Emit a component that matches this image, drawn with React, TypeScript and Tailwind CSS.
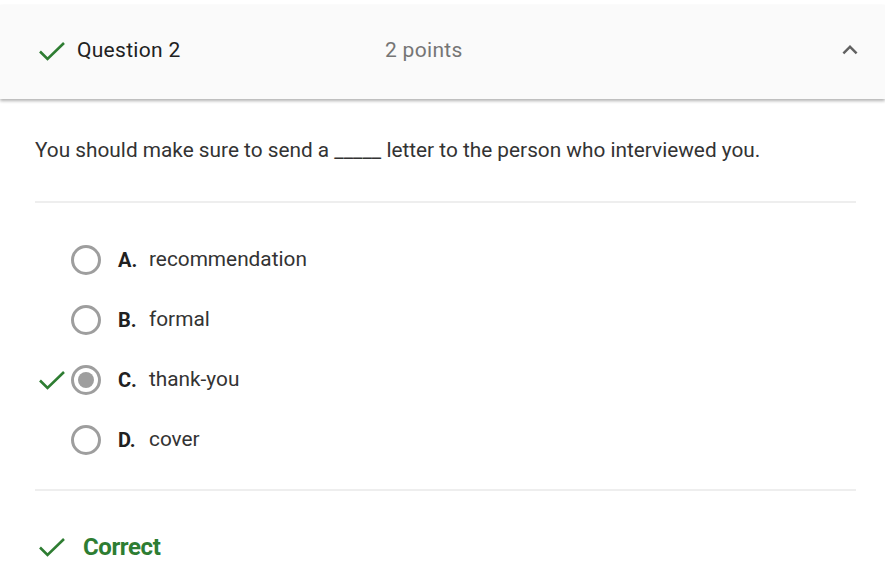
import { useState } from 'react';

const options = [
  { letter: 'A.', text: 'recommendation' },
  { letter: 'B.', text: 'formal' },
  { letter: 'C.', text: 'thank-you' },
  { letter: 'D.', text: 'cover' },
];

const Check = ({ className = '' }: { className?: string }) => (
  <svg viewBox="0 0 28 20" className={className} fill="none">
    <path d="M2 10.5l7.5 7.5L26 2" stroke="#2e7d32" strokeWidth="2.6" />
  </svg>
);

export default function App() {
  const [selected] = useState(2);

  return (
    <div className="w-[885px] h-[588px] bg-white overflow-hidden text-[#212121]" style={{ fontFamily: 'Roboto, "Liberation Sans", sans-serif' }}>
      <div className="h-[5px]" />
      <div className="h-[94px] bg-[#fafafa] shadow-[0_2px_3px_rgba(0,0,0,0.3)] flex items-center pl-[38px] pr-[20px] pb-[3px]">
        <div className="w-[347px] flex items-center">
          <Check className="w-[28px] h-[20px]" />
          <span className="ml-[11px] text-[21px] tracking-[0.3px]">Question 2</span>
        </div>
        <span className="text-[21px] tracking-[0.3px] text-[#757575]">2 points</span>
        <svg viewBox="0 0 24 24" className="ml-auto mb-[2px] w-[30px] h-[30px]" fill="#616161">
          <path d="M7.41 15.41L12 10.83l4.59 4.58L18 14l-6-6-6 6z" />
        </svg>
      </div>

      <div className="px-[35px]">
        <p className="mt-[38px] text-[20.8px] text-[#333] leading-[26px]">
          You should make sure to send a _____ letter to the person who interviewed you.
        </p>
        <div className="mt-[38px] mr-[-6px] h-[2px] bg-[#eeeeee]" />

        <div className="pt-[27px] pb-[20px] flex flex-col">
          {options.map((o, i) => (
            <div key={o.letter} className="h-[60px] flex items-center">
              <div className="w-[36px] flex items-center">
                {i === selected && <Check className="w-[28px] h-[20px] ml-[3px]" />}
              </div>
              <div className="w-[30px] h-[30px] rounded-full border-[3px] border-[#9e9e9e] flex items-center justify-center">
                {i === selected && <div className="w-[16px] h-[16px] rounded-full bg-[#9e9e9e]" />}
              </div>
              <span className="ml-[17px] w-[31px] font-bold text-[20px]">{o.letter}</span>
              <span className="text-[20.8px] text-[#333]">{o.text}</span>
            </div>
          ))}
        </div>

        <div className="mt-[-1px] mr-[-6px] h-[2px] bg-[#eeeeee]" />
        <div className="mt-[38px] flex items-center">
          <Check className="w-[28px] h-[20px] ml-[3px]" />
          <span className="ml-[17px] text-[24px] font-bold text-[#2e7d32] tracking-[-0.4px]">Correct</span>
        </div>
      </div>
    </div>
  );
}
